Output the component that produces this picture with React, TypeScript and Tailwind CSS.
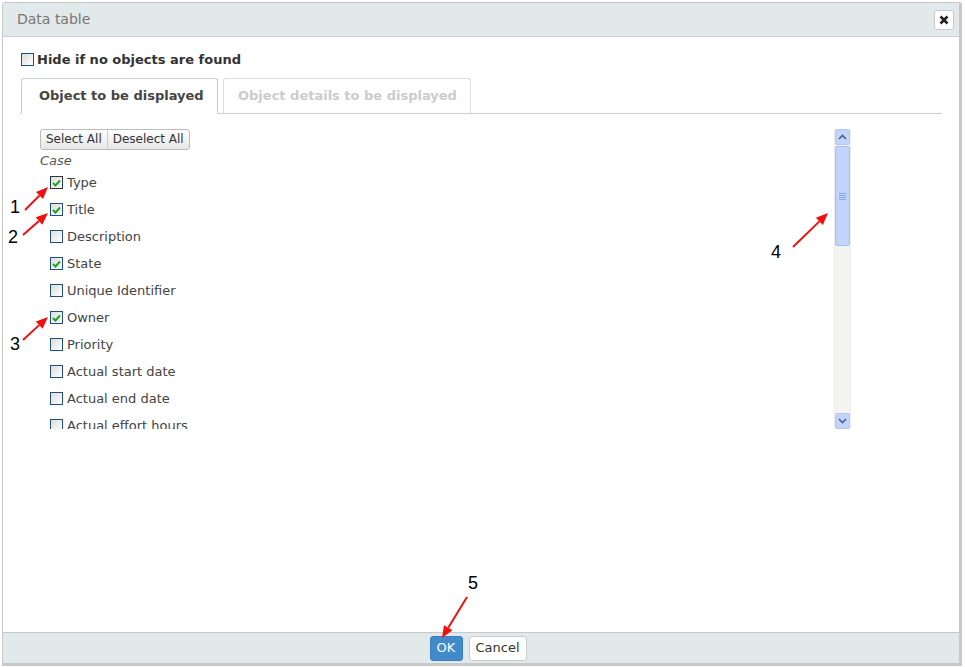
import React from "react";

const items: { label: string; checked: boolean; focus?: boolean }[] = [
  { label: "Type", checked: true, focus: true },
  { label: "Title", checked: true },
  { label: "Description", checked: false },
  { label: "State", checked: true },
  { label: "Unique Identifier", checked: false },
  { label: "Owner", checked: true },
  { label: "Priority", checked: false },
  { label: "Actual start date", checked: false },
  { label: "Actual end date", checked: false },
  { label: "Actual effort hours", checked: false },
];

function Check({ checked, focus }: { checked: boolean; focus?: boolean }) {
  return (
    <span
      className={
        "relative inline-flex h-[13px] w-[13px] shrink-0 items-center justify-center border border-[#1f4f7f] bg-gradient-to-br from-[#dcdcd8] to-white " +
        (focus ? "outline outline-1 outline-dotted outline-[#222] outline-offset-[-1px]" : "")
      }
    >
      {checked && (
        <svg width="9" height="8" viewBox="0 0 9 8">
          <path d="M1 4 L3.5 6.5 L8 1.5" stroke="#21a121" strokeWidth="2" fill="none" />
        </svg>
      )}
    </span>
  );
}

function Arrow({ x1, y1, x2, y2 }: { x1: number; y1: number; x2: number; y2: number }) {
  const ang = Math.atan2(y2 - y1, x2 - x1);
  const len = 12;
  const w = 5;
  const bx = x2 - len * Math.cos(ang);
  const by = y2 - len * Math.sin(ang);
  const px = -Math.sin(ang) * w;
  const py = Math.cos(ang) * w;
  return (
    <g>
      <line x1={x1} y1={y1} x2={bx} y2={by} stroke="#f01010" strokeWidth="2" />
      <polygon points={`${x2},${y2} ${bx + px},${by + py} ${bx - px},${by - py}`} fill="#f01010" />
    </g>
  );
}

export default function App() {
  return (
    <div className="relative h-[667px] w-[965px] overflow-hidden bg-white" style={{ fontFamily: "'DejaVu Sans', sans-serif" }}>
      <div className="ml-[2px] mt-[2px] flex h-[664px] w-[960px] flex-col rounded-t-[3px] border border-r-[3px] border-b-[3px] border-[#c8c8c8] bg-white">
        {/* header */}
        <div className="flex h-[34px] shrink-0 items-center justify-between border-b border-[#c9cfd0] bg-[#e2e9ea] pl-[14px] pr-[5px]">
          <span className="text-[14px] text-[#777]">Data table</span>
          <button className="flex h-[20px] w-[20px] items-center justify-center rounded-[3px] border border-[#c8c8c8] bg-white">
            <svg width="10" height="10" viewBox="0 0 10 10">
              <path d="M1.5 1.5 L8.5 8.5 M8.5 1.5 L1.5 8.5" stroke="#222" strokeWidth="2.6" />
            </svg>
          </button>
        </div>
        {/* body */}
        <div className="flex min-h-0 flex-1 flex-col pl-[17px] pr-[17px] pt-[13px]">
          <div className="flex items-center gap-[3px] pl-[1px]">
            <Check checked={false} />
            <span className="text-[13px] font-bold text-[#333]">Hide if no objects are found</span>
          </div>
          <div className="mt-[8px] flex items-end gap-[5px] border-b border-[#ccc] pl-[1px]">
            <div className="-mb-px flex h-[36px] w-[197px] items-center rounded-t-[3px] border border-b-white border-[#ccc] bg-white pl-[17px] text-[13px] font-bold text-[#444]">
              Object to be displayed
            </div>
            <div className="flex h-[35px] w-[248px] items-center rounded-t-[3px] border border-b-0 border-[#ddd] bg-white pl-[14px] text-[13px] font-bold text-[#ccc]">
              Object details to be displayed
            </div>
          </div>
          <div className="ml-[18px] mt-[15px] flex h-[300px] w-[813px]">
            <div className="min-w-0 flex-1 overflow-hidden">
              <div className="flex pl-[2px]">
                <div className="flex h-[21px] overflow-hidden rounded-[3px] border border-[#bbb] bg-gradient-to-b from-white to-[#e6e6e6] text-[12px] text-[#333]">
                  <span className="flex items-center border-r border-[#ccc] px-[5px]">Select All</span>
                  <span className="flex items-center px-[5px]">Deselect All</span>
                </div>
              </div>
              <div className="mt-[1px] pl-[2px] text-[13px] italic text-[#555]">Case</div>
              <div className="-mt-[1px] flex flex-col pl-[12px]">
                {items.map((it) => (
                  <div key={it.label} className="flex h-[27px] items-center gap-[4px]">
                    <Check checked={it.checked} focus={it.focus} />
                    <span className="text-[13px] text-[#444]">{it.label}</span>
                  </div>
                ))}
              </div>
            </div>
            {/* scrollbar */}
            <div className="flex w-[17px] flex-col border-l border-r border-[#eee] bg-[#f4f4f0]">
              <div className="flex h-[16px] items-center justify-center rounded-[2px] border border-[#b7c8f0] bg-[#c3d4fc]">
                <svg width="9" height="6" viewBox="0 0 9 6">
                  <path d="M1 5 L4.5 1.5 L8 5" stroke="#4d6185" strokeWidth="1.6" fill="none" />
                </svg>
              </div>
              <div className="mt-[1px] flex h-[100px] items-center justify-center rounded-[2px] border border-[#a8bff5] bg-[#c3d4fc]">
                <svg width="7" height="8" viewBox="0 0 7 8">
                  <path d="M0 1.5 H7 M0 3.5 H7 M0 5.5 H7 M0 7.5 H7" stroke="#8aa6ee" strokeWidth="1" />
                </svg>
              </div>
              <div className="flex-1" />
              <div className="flex h-[16px] items-center justify-center rounded-[2px] border border-[#b7c8f0] bg-[#c3d4fc]">
                <svg width="9" height="6" viewBox="0 0 9 6">
                  <path d="M1 1 L4.5 4.5 L8 1" stroke="#4d6185" strokeWidth="1.6" fill="none" />
                </svg>
              </div>
            </div>
          </div>
        </div>
        {/* footer */}
        <div className="flex h-[31px] shrink-0 items-center justify-center gap-[6px] border-t border-[#c8c8c8] bg-[#e2e9ea] pr-[6px]">
          <button className="flex h-[25px] w-[33px] items-center justify-center rounded-[3px] border border-[#3a7fc0] bg-[#428bca] text-[13px] text-white">
            OK
          </button>
          <button className="flex h-[25px] w-[58px] items-center justify-center rounded-[3px] border border-[#ccc] bg-white text-[13px] text-[#333]">
            Cancel
          </button>
        </div>
      </div>

      {/* annotations */}
      <svg className="pointer-events-none absolute left-0 top-0" width="965" height="667">
        <Arrow x1={25} y1={210} x2={48} y2={187} />
        <Arrow x1={23} y1={235} x2={48} y2={213} />
        <Arrow x1={23} y1={340} x2={48} y2={317} />
        <Arrow x1={793} y1={247} x2={828} y2={213} />
        <Arrow x1={467} y1={597} x2={442} y2={638} />
      </svg>
      <div className="absolute left-[10px] top-[198px] text-[18px] leading-none text-black" style={{ fontFamily: "'Liberation Sans', sans-serif" }}>1</div>
      <div className="absolute left-[8px] top-[228px] text-[18px] leading-none text-black" style={{ fontFamily: "'Liberation Sans', sans-serif" }}>2</div>
      <div className="absolute left-[10px] top-[335px] text-[18px] leading-none text-black" style={{ fontFamily: "'Liberation Sans', sans-serif" }}>3</div>
      <div className="absolute left-[771px] top-[243px] text-[18px] leading-none text-black" style={{ fontFamily: "'Liberation Sans', sans-serif" }}>4</div>
      <div className="absolute left-[468px] top-[574px] text-[18px] leading-none text-black" style={{ fontFamily: "'Liberation Sans', sans-serif" }}>5</div>
    </div>
  );
}
